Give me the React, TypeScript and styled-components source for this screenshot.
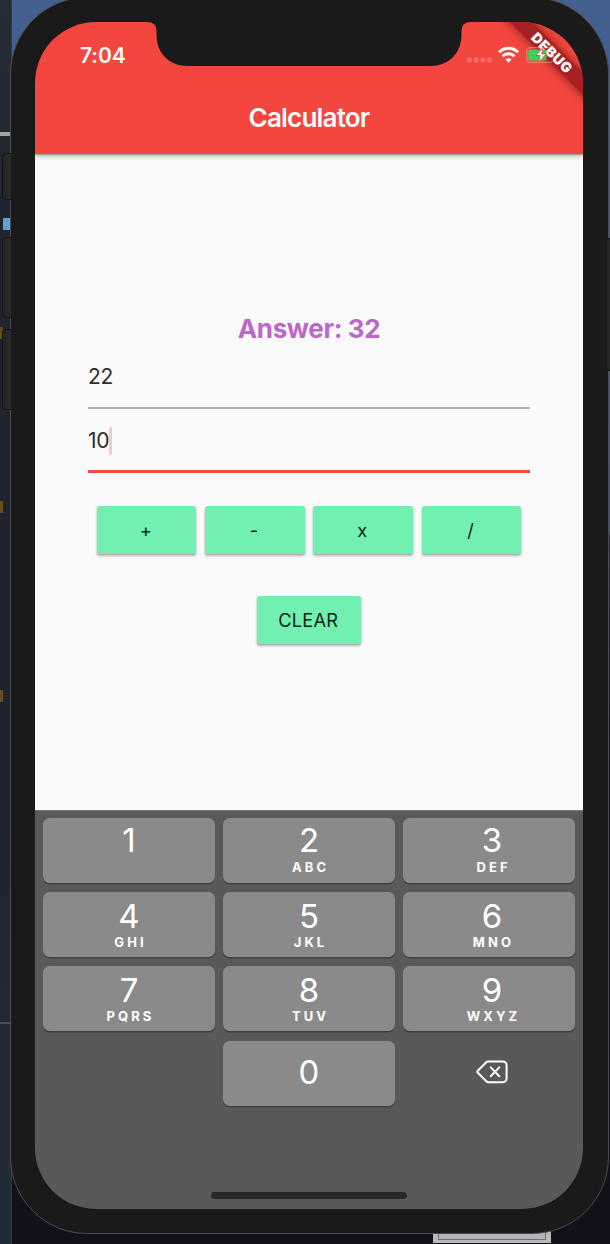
import React from "react";
import styled, { createGlobalStyle } from "styled-components";

const GlobalStyle = createGlobalStyle`
  * { box-sizing: border-box; }
  body { margin: 0; background: #12111a; font-family: Inter, "Liberation Sans", sans-serif; }
  button { font-family: inherit; }
`;

const Desktop = styled.div`
  position: relative;
  width: 610px;
  height: 1244px;
  overflow: hidden;
  background: linear-gradient(180deg, #43608f 0, #47608c 120px, #455a80 530px, #2b2444 536px, #15131d 760px, #12111a 100%);
`;

const EditorStrip = styled.div`
  position: absolute;
  left: 0;
  top: 0;
  width: 12px;
  height: 1244px;
  background: linear-gradient(180deg, #282c35 0, #20242e 240px, #20232d 780px, #242a35 1100px, #242a33 100%);
  border-right: 1px solid #353944;
`;

const Mark = styled.i<{ $x: number; $y: number; $w: number; $h: number; $c: string }>`
  position: absolute;
  left: ${p => p.$x}px;
  top: ${p => p.$y}px;
  width: ${p => p.$w}px;
  height: ${p => p.$h}px;
  background: ${p => p.$c};
`;

const WindowPeek = styled.div`
  position: absolute;
  left: 433px;
  top: 1220px;
  width: 118px;
  height: 23px;
  background: #b9b9b9;
  padding: 0 5px 5px;
  &::before {
    content: "";
    display: block;
    height: 18px;
    background: #b4b2bd;
    border: 1px solid #6e6e75;
  }
`;

const Device = styled.div`
  position: absolute;
  left: 10px;
  top: -3px;
  width: 599px;
  height: 1237px;
  border-radius: 77px;
  border: 1px solid #4b4d51;
  background: #1a1a1a;
  padding: 24px 24px;
`;

const SideButton = styled.i<{ $x: number; $y: number; $h: number; $w: number }>`
  position: absolute;
  left: ${p => p.$x}px;
  top: ${p => p.$y}px;
  width: ${p => p.$w}px;
  height: ${p => p.$h}px;
  background: linear-gradient(90deg, #232323, #2b2b2b 60%, #1b1b1b 70%);
  border: 1px solid #161616;
  border-radius: 3px;
`;

const Screen = styled.main`
  position: relative;
  display: flex;
  flex-direction: column;
  width: 548px;
  height: 1187px;
  overflow: hidden;
  border-radius: 61px;
`;

const Header = styled.header`
  position: relative;
  flex: none;
  height: 132px;
  background: #f3463e;
  color: #fff;
  box-shadow: 0 2px 5px rgba(0, 0, 0, 0.3), 0 1px 1px rgba(0, 0, 0, 0.2);
`;

const StatusBar = styled.div`
  display: flex;
  justify-content: space-between;
  height: 58px;
  padding: 21px 28px 0 45px;
`;

const Clock = styled.span`
  margin-top: 1px;
  font-size: 21px;
  line-height: 24px;
  font-weight: 600;
  letter-spacing: -0.1px;
`;

const StatusIcons = styled.svg`
  position: relative;
  z-index: 2;
  display: block;
  margin-top: 1px;
`;

const Notch = styled.svg`
  position: absolute;
  left: 112px;
  top: 0;
`;

const Title = styled.h1`
  margin: 0;
  height: 74px;
  line-height: 75px;
  text-align: center;
  font-size: 26px;
  font-weight: 600;
  letter-spacing: -0.8px;
`;

const DebugBanner = styled.div`
  position: absolute;
  z-index: 1;
  left: 446px;
  top: 22.5px;
  width: 142px;
  height: 16px;
  transform: rotate(45deg);
  background: rgba(158, 28, 32, 0.9);
  box-shadow: 0 0 8px rgba(0, 0, 0, 0.5);
  color: #fff;
  text-align: center;
  font-size: 14px;
  line-height: 15px;
  font-weight: 900;
  letter-spacing: 0.5px;
`;

const Content = styled.section`
  height: 656px;
  padding: 159px 53px 0;
  display: flex;
  flex-direction: column;
  align-items: center;
  background: #fafafa;
`;

const Answer = styled.div`
  height: 31px;
  line-height: 32px;
  font-size: 26px;
  font-weight: 700;
  letter-spacing: -0.35px;
  color: #ba68c8;
`;

const Field = styled.div<{ $focused?: boolean }>`
  display: flex;
  align-items: center;
  align-self: stretch;
  height: ${p => (p.$focused ? 64 : 65)}px;
  padding-top: 2px;
  border-bottom: ${p => (p.$focused ? "3px solid #f44a40" : "2px solid #b0b0b0")};
  font-size: 21px;
  line-height: 28px;
  letter-spacing: -0.3px;
  color: #2d2d2d;
`;

const Caret = styled.i`
  width: 3px;
  height: 28px;
  margin-left: -0.5px;
  border-radius: 1px;
  background: #fbc7c5;
`;

const Operators = styled.div`
  display: flex;
  gap: 8.9px;
  margin: 33px 0 42px;
`;

const ActionButton = styled.button<{ $w: number }>`
  width: ${p => p.$w}px;
  height: 48px;
  padding: 0 1.5px 0 0;
  border: 0;
  border-radius: 2.6px;
  background: #71f0b2;
  color: #0e1f17;
  font-size: 18.3px;
  font-weight: 400;
  letter-spacing: 0.2px;
  line-height: 47px;
  box-shadow: 0 2px 3px rgba(0, 0, 0, 0.26), 0 1px 1px rgba(0, 0, 0, 0.12);
`;

const Keyboard = styled.section`
  position: relative;
  flex: 1;
  padding: 7px 8px;
  background: #595959;
  border-top: 1px solid #777;
`;

const Keys = styled.div`
  display: grid;
  grid-template-columns: repeat(3, 172px);
  grid-auto-rows: 65px;
  gap: 9.2px 8px;
`;

const Key = styled.button<{ $shift: number; $dx: number }>`
  display: flex;
  flex-direction: column;
  align-items: center;
  padding: ${p => p.$shift}px 0 0 ${p => p.$dx}px;
  border: 0;
  border-radius: 6.5px;
  background: #8a8a8a;
  box-shadow: 0 1.4px 0 #404040;
  color: #fff;
`;

const Digit = styled.span`
  font-size: 33px;
  line-height: 34px;
  font-weight: 400;
`;

const Letters = styled.span<{ $up: number }>`
  margin-top: ${p => -p.$up}px;
  padding-left: 3px;
  font-size: 13px;
  line-height: 16px;
  font-weight: 700;
  letter-spacing: 3.1px;
`;

const Blank = styled.span``;

const Backspace = styled.button`
  display: flex;
  align-items: center;
  justify-content: center;
  padding: 0 0 2px 6px;
  border: 0;
  background: none;
`;

const HomeBar = styled.i`
  position: absolute;
  left: 176px;
  bottom: 10.5px;
  width: 196px;
  height: 7px;
  border-radius: 4px;
  background: #282828;
`;

const KEYS = [
  ["1", ""], ["2", "ABC"], ["3", "DEF"],
  ["4", "GHI"], ["5", "JKL"], ["6", "MNO"],
  ["7", "PQRS"], ["8", "TUV"], ["9", "WXYZ"],
];
const SHIFTS = [5, 6.7, 7];

export default function App() {
  return (
    <>
      <GlobalStyle />
      <Desktop>
        <EditorStrip />
        <Mark $x={0} $y={132} $w={11} $h={4} $c="#a5a49f" />
        <Mark $x={3} $y={218} $w={8} $h={12} $c="#629fd8" />
        <Mark $x={0} $y={327} $w={3} $h={12} $c="#6b4c1e" />
        <Mark $x={0} $y={501} $w={3} $h={12} $c="#6b4c1e" />
        <Mark $x={0} $y={690} $w={3} $h={12} $c="#6b4c1e" />
        <Mark $x={0} $y={1022} $w={11} $h={2} $c="#4a4e55" />
        <WindowPeek />
        <Device>
          <Screen>
            <Header>
              <StatusBar>
                <Clock>7:04</Clock>
                <StatusIcons width="88" height="24" viewBox="0 0 88 24">
                  <g fill="#fff" fillOpacity="0.22">
                    <rect x="0" y="13.6" width="4.8" height="4.8" rx="1.6" />
                    <rect x="6.7" y="13.6" width="4.8" height="4.8" rx="1.6" />
                    <rect x="13.4" y="13.6" width="4.8" height="4.8" rx="1.6" />
                    <rect x="20.1" y="13.6" width="4.8" height="4.8" rx="1.6" />
                  </g>
                  <g fill="none" stroke="#fff" strokeWidth="2.9">
                    <path d="M32 8.2a13.4 13.4 0 0 1 19 0" />
                    <path d="M35.6 12.2a8.3 8.3 0 0 1 11.8 0" />
                  </g>
                  <path d="M41.5 18.8l-3-3.2a4.3 4.3 0 0 1 6 0z" fill="#fff" />
                  <rect x="59.7" y="3.7" width="27" height="14.6" rx="3.8" fill="none" stroke="#fff" strokeOpacity="0.3" strokeWidth="1.3" />
                  <rect x="61.3" y="5.5" width="18.2" height="11" rx="2.2" fill="#35d15a" />
                  <path d="M76 3.2l-7 8.3h4.2l-1.7 6.8 7.7-8.3h-4.4z" fill="#fff" stroke="#e8463e" strokeWidth="0.8" />
                </StatusIcons>
              </StatusBar>
              <Title>Calculator</Title>
            </Header>
            <Content>
              <Answer>Answer: 32</Answer>
              <Field>22</Field>
              <Field $focused>10<Caret /></Field>
              <Operators>
                {["+", "-", "x", "/"].map(o => <ActionButton key={o} $w={99.4}>{o}</ActionButton>)}
              </Operators>
              <ActionButton $w={103.6}>CLEAR</ActionButton>
            </Content>
            <Keyboard>
              <Keys>
                {KEYS.map(([digit, letters], i) => (
                  <Key key={digit} $shift={SHIFTS[Math.floor(i / 3)]} $dx={i % 3 === 2 ? 6 : 0}>
                    <Digit>{digit}</Digit>
                    {letters && <Letters $up={i < 3 ? -2 : -1}>{letters}</Letters>}
                  </Key>
                ))}
                <Blank />
                <Key $shift={14} $dx={0}><Digit>0</Digit></Key>
                <Backspace aria-label="Delete">
                  <svg width="32" height="24" viewBox="0 0 32 24" fill="none" stroke="#fff" strokeWidth="2" strokeLinecap="round" strokeLinejoin="round">
                    <path d="M12.4 1.4H27a3.6 3.6 0 0 1 3.6 3.6v13.6a3.6 3.6 0 0 1-3.6 3.6H12.4a3 3 0 0 1-2.1-.9L1.8 12.8a1.4 1.4 0 0 1 0-2L10.3 2.3a3 3 0 0 1 2.1-.9z" />
                    <path d="M14.7 7.4l8.6 8.8M23.3 7.4l-8.6 8.8" />
                  </svg>
                </Backspace>
              </Keys>
              <HomeBar />
            </Keyboard>
            <DebugBanner>DEBUG</DebugBanner>
            <Notch width="324" height="45" viewBox="0 0 324 45">
              <path d="M0 0Q9.5 0 9.5 9V13C9.5 31 22 44 41 44H283C302 44 314.5 31 314.5 13V9Q314.5 0 324 0z" fill="#1a1a1a" />
            </Notch>
          </Screen>
        </Device>
        <SideButton $x={2} $y={153} $w={14} $h={47} />
        <SideButton $x={2} $y={237} $w={14} $h={81} />
        <SideButton $x={2} $y={329} $w={14} $h={81} />
        <SideButton $x={606} $y={238} $w={8} $h={133} />
      </Desktop>
    </>
  );
}
